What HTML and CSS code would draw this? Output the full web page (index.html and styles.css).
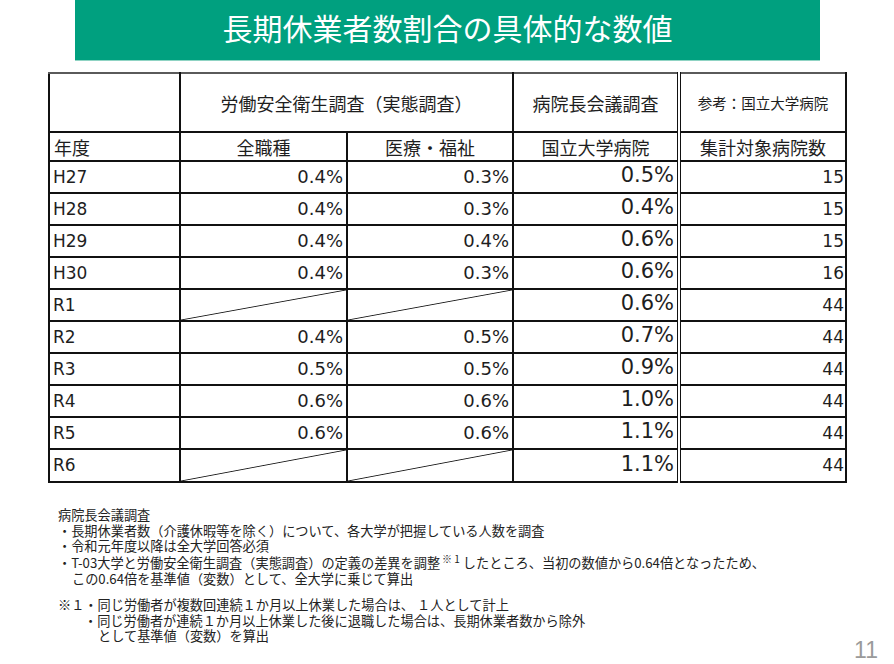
FILE: index.html
```html
<!DOCTYPE html>
<html lang="ja">
<head>
<meta charset="utf-8">
<title>長期休業者数割合の具体的な数値</title>
<link rel="stylesheet" href="styles.css">
</head>
<body>
<div class="slide">
  <header class="title-bar"><h1>長期休業者数割合の具体的な数値</h1></header>
  <table class="data">
    <colgroup>
      <col class="c-year"><col class="c-all"><col class="c-med"><col class="c-hosp"><col class="c-count">
    </colgroup>
    <thead>
      <tr class="h1">
        <th></th>
        <th colspan="2">労働安全衛生調査（実態調査）</th>
        <th>病院長会議調査</th>
        <th class="ref sep">参考：国立大学病院</th>
      </tr>
      <tr class="h2">
        <th class="year">年度</th>
        <th>全職種</th>
        <th>医療・福祉</th>
        <th>国立大学病院</th>
        <th class="sep">集計対象病院数</th>
      </tr>
    </thead>
    <tbody>
      <tr><td class="yr">H27</td><td class="pct">0.4%</td><td class="pct">0.3%</td><td class="big">0.5%</td><td class="cnt sep">15</td></tr>
      <tr><td class="yr">H28</td><td class="pct">0.4%</td><td class="pct">0.3%</td><td class="big">0.4%</td><td class="cnt sep">15</td></tr>
      <tr><td class="yr">H29</td><td class="pct">0.4%</td><td class="pct">0.4%</td><td class="big">0.6%</td><td class="cnt sep">15</td></tr>
      <tr><td class="yr">H30</td><td class="pct">0.4%</td><td class="pct">0.3%</td><td class="big">0.6%</td><td class="cnt sep">16</td></tr>
      <tr><td class="yr">R1</td><td class="none"></td><td class="none"></td><td class="big">0.6%</td><td class="cnt sep">44</td></tr>
      <tr><td class="yr">R2</td><td class="pct">0.4%</td><td class="pct">0.5%</td><td class="big">0.7%</td><td class="cnt sep">44</td></tr>
      <tr><td class="yr">R3</td><td class="pct">0.5%</td><td class="pct">0.5%</td><td class="big">0.9%</td><td class="cnt sep">44</td></tr>
      <tr><td class="yr">R4</td><td class="pct">0.6%</td><td class="pct">0.6%</td><td class="big">1.0%</td><td class="cnt sep">44</td></tr>
      <tr><td class="yr">R5</td><td class="pct">0.6%</td><td class="pct">0.6%</td><td class="big">1.1%</td><td class="cnt sep">44</td></tr>
      <tr><td class="yr">R6</td><td class="none"></td><td class="none"></td><td class="big">1.1%</td><td class="cnt sep">44</td></tr>
    </tbody>
  </table>
  <footer class="foot">
    <div class="notes">
      <p class="note-title">病院長会議調査</p>
      <p>・長期休業者数（介護休暇等を除く）について、各大学が把握している人数を調査</p>
      <p>・令和元年度以降は全大学回答必須</p>
      <p class="sup-line">・T-03大学と労働安全衛生調査（実態調査）の定義の差異を調整<sup>※ 1</sup> したところ、当初の数値から0.64倍となったため、</p>
      <p class="indent1">この0.64倍を基準値（変数）として、全大学に乗じて算出</p>
      <p class="gap">※１・同じ労働者が複数回連続１か月以上休業した場合は、 １人として計上</p>
      <p class="indent2">・同じ労働者が連続１か月以上休業した後に退職した場合は、長期休業者数から除外</p>
      <p class="indent3">として基準値（変数）を算出</p>
    </div>
    <div class="page-no">11</div>
  </footer>
</div>
</body>
</html>
```

FILE: styles.css
```css
html, body {
  margin: 0;
  padding: 0;
  background: #ffffff;
}
body {
  width: 894px;
  height: 664px;
  overflow: hidden;
  font-family: "Noto Sans CJK JP", sans-serif;
  color: #1e1e1e;
}
.slide {
  display: flex;
  flex-direction: column;
  height: 664px;
}
.title-bar {
  margin-left: 75px;
  width: 745px;
  height: 60px;
  box-sizing: border-box;
  padding-bottom: 6px;
  background: #00a07f;
  box-shadow: 0 1px 0 #8fd3c3;
  display: flex;
  align-items: center;
  justify-content: center;
}
.title-bar h1 {
  margin: 0;
  font-size: 30px;
  font-weight: 400;
  line-height: 1;
  color: #ffffff;
}

/* table */
.data {
  margin: 12px 0 0 48px;
  border-collapse: collapse;
  table-layout: fixed;
  width: 797px;
}
.c-year { width: 131px; }
.c-all { width: 167px; }
.c-med { width: 166px; }
.c-hosp { width: 166px; }
.c-count { width: 167px; }
.data th, .data td {
  border: 2px solid #111;
  padding: 0;
}
.data thead tr.h1 th {
  border-top-color: #5a5a5a;
}
.data th {
  font-weight: 400;
  font-size: 18px;
  text-align: center;
  vertical-align: middle;
  white-space: nowrap;
}
.data .sep {
  border-left: 4px double #111;
}
.data tr.h1 { height: 59px; }
.data tr.h2 { height: 29px; }
.data th.ref { font-size: 14.5px; }
.data th.year {
  text-align: left;
  padding-left: 4px;
}
.data tbody tr { height: 32px; }
.data tbody tr:last-child { height: 33px; }
.data td {
  font-family: "DejaVu Sans", "Noto Sans CJK JP", sans-serif;
  vertical-align: middle;
  white-space: nowrap;
  line-height: 1;
}
.data td.yr {
  font-size: 17px;
  padding-left: 3px;
  text-align: left;
}
.data td.pct {
  font-size: 18px;
  text-align: right;
  padding-right: 3px;
}
.data td.big {
  font-size: 21px;
  text-align: right;
  padding-right: 3px;
  padding-bottom: 3px;
}
.data td.cnt {
  font-size: 17px;
  text-align: right;
  padding-right: 1px;
}
.data td.none {
  background: linear-gradient(to bottom right, transparent calc(50% - 0.9px), #222 50%, transparent calc(50% + 0.9px));
}

/* footer notes */
.foot {
  display: flex;
  justify-content: space-between;
  align-items: flex-end;
  margin-top: 24px;
  padding-left: 58px;
  padding-right: 16px;
}
.notes {
  font-size: 13.2px;
  line-height: 15.5px;
  color: #222;
}
.notes p {
  margin: 0;
  white-space: nowrap;
}
.notes .sup-line {
  line-height: 17px;
}
.notes sup {
  font-size: 10px;
  line-height: 0;
  vertical-align: 5px;
  margin-left: 2px;
}
.notes .indent1 { padding-left: 14px; }
.notes .gap { margin-top: 11px; }
.notes .indent2 { padding-left: 26px; }
.notes .indent3 { padding-left: 40px; }
.page-no {
  font-family: "Liberation Sans", "Open Sans", sans-serif;
  font-weight: 400;
  font-size: 23px;
  line-height: 1;
  color: #9a9a9a;
  margin-bottom: -18px;
}
```
